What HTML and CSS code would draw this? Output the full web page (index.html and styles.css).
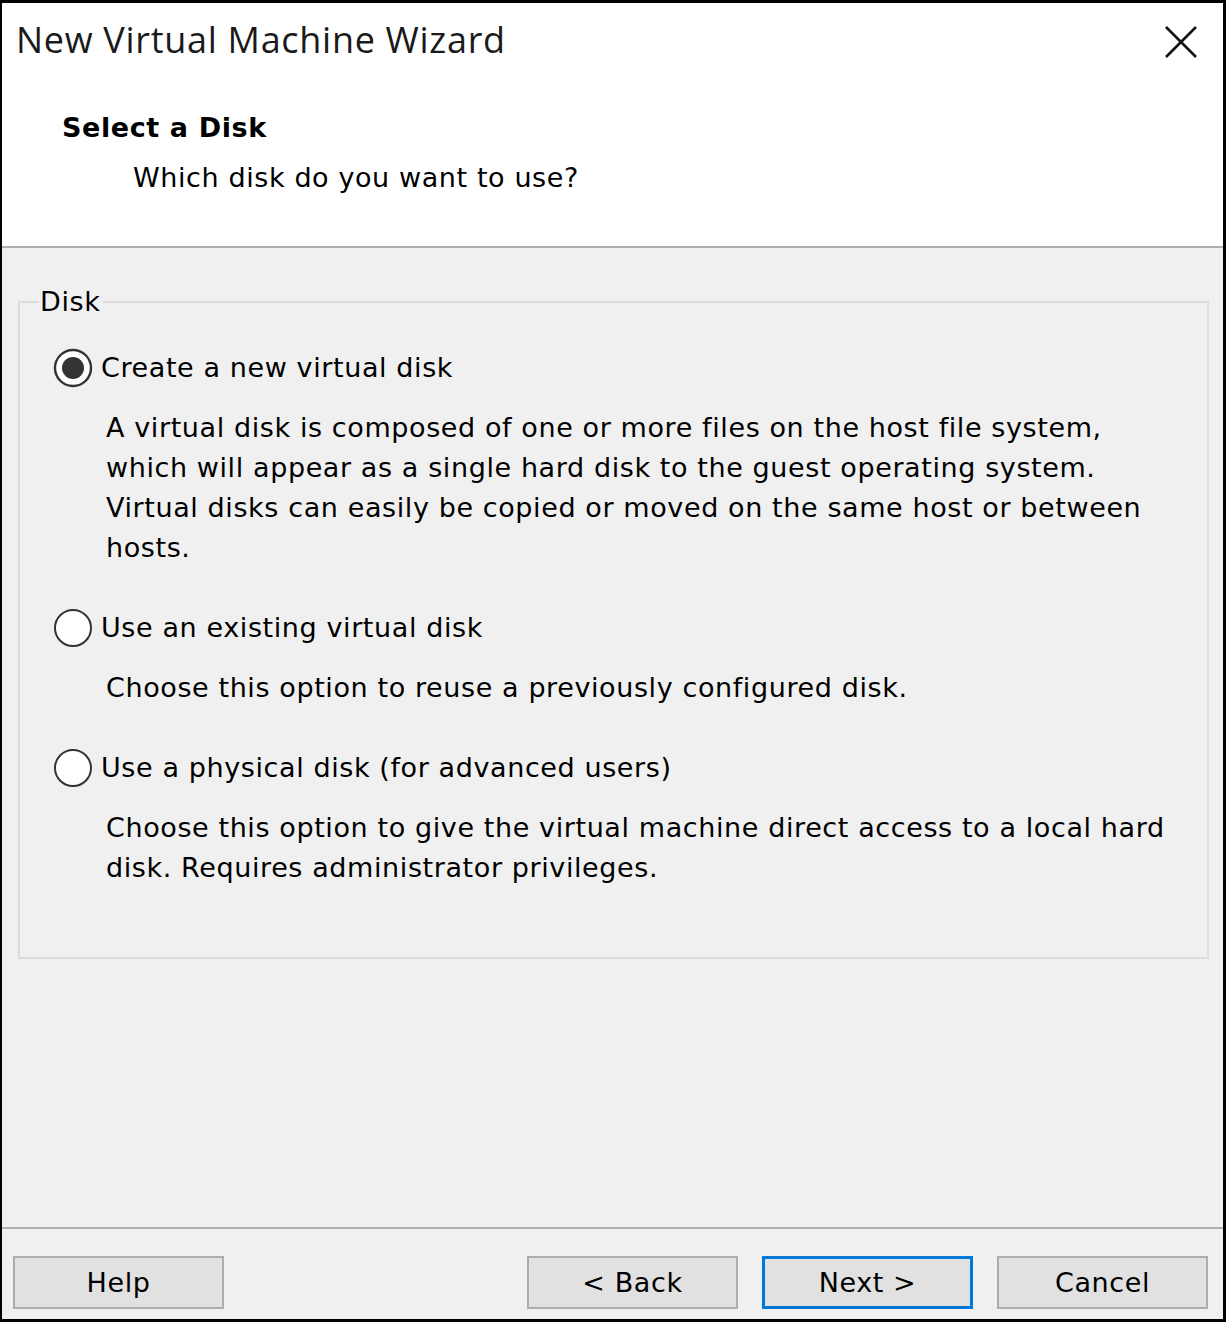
FILE: index.html
```html
<!DOCTYPE html>
<html>
<head>
<meta charset="utf-8">
<link rel="stylesheet" href="styles.css">
</head>
<body>
<div class="dialog">
  <div class="header">
    <div class="title-row">
      <div class="title">New Virtual Machine Wizard</div>
      <svg class="close" width="34" height="34" viewBox="0 0 34 34"><path d="M2 2 L32 32 M32 2 L2 32" stroke="#111" stroke-width="2.6" fill="none"/></svg>
    </div>
    <div class="page-title">Select a Disk</div>
    <div class="page-sub">Which disk do you want to use?</div>
  </div>
  <div class="content">
    <fieldset class="group">
      <legend class="group-label">Disk</legend>
      <div class="option first">
        <svg class="radio" width="40" height="40" viewBox="0 0 40 40"><circle cx="20" cy="20" r="18" fill="#fff" stroke="#333" stroke-width="2.4"/><circle cx="20" cy="20" r="11" fill="#333"/></svg>
        <span class="opt-label">Create a new virtual disk</span>
      </div>
      <p class="desc">A virtual disk is composed of one or more files on the host file system,<br>which will appear as a single hard disk to the guest operating system.<br>Virtual disks can easily be copied or moved on the same host or between<br>hosts.</p>
      <div class="option">
        <svg class="radio" width="40" height="40" viewBox="0 0 40 40"><circle cx="20" cy="20" r="18" fill="#fff" stroke="#333" stroke-width="2"/></svg>
        <span class="opt-label">Use an existing virtual disk</span>
      </div>
      <p class="desc">Choose this option to reuse a previously configured disk.</p>
      <div class="option">
        <svg class="radio" width="40" height="40" viewBox="0 0 40 40"><circle cx="20" cy="20" r="18" fill="#fff" stroke="#333" stroke-width="2"/></svg>
        <span class="opt-label">Use a physical disk (for advanced users)</span>
      </div>
      <p class="desc">Choose this option to give the virtual machine direct access to a local hard<br>disk. Requires administrator privileges.</p>
    </fieldset>
  </div>
  <div class="footer">
    <button class="btn">Help</button>
    <div class="spacer"></div>
    <button class="btn">&lt; Back</button>
    <button class="btn default">Next &gt;</button>
    <button class="btn">Cancel</button>
  </div>
</div>
</body>
</html>
```

FILE: styles.css
```css
html, body {
  margin: 0;
  padding: 0;
  background: #ffffff;
}
.dialog {
  box-sizing: border-box;
  width: 1226px;
  height: 1322px;
  border-style: solid;
  border-color: #000;
  border-width: 3px 3px 3px 2px;
  background: #f0f0f0;
  display: flex;
  flex-direction: column;
  font-family: "DejaVu Sans", sans-serif;
  font-size: 27px;
  letter-spacing: 0.6px;
  color: #000;
}
.header {
  box-sizing: border-box;
  height: 245px;
  background: #fff;
  border-bottom: 2px solid #b0b0b0;
  padding-top: 15px;
}
.title-row {
  display: flex;
  justify-content: space-between;
  align-items: center;
  padding-left: 14px;
  padding-right: 25px;
  height: 44px;
}
.title {
  font-family: "Open Sans", "Noto Sans", sans-serif;
  font-size: 36px;
  letter-spacing: 0.7px;
  line-height: 44px;
  color: #1a1a1a;
}
.close {
  display: block;
  margin-top: 3px;
}
.page-title {
  font-weight: bold;
  margin-left: 60px;
  margin-top: 46px;
  line-height: 40px;
  font-size: 27px;
}
.page-sub {
  margin-left: 131px;
  margin-top: 10px;
  line-height: 40px;
}
.content {
  flex: 1;
  padding: 0 14px 0 16px;
}
.group {
  margin: 34px 0 0 0;
  padding: 0 0 0 33px;
  height: 677px;
  box-sizing: border-box;
  border: 2px solid #dcdcdc;
  min-width: 0;
}
.group-label {
  margin-left: -14px;
  padding: 0 3px 0 1px;
  line-height: 40px;
}
.option {
  display: flex;
  align-items: center;
  gap: 8px;
  height: 40px;
  margin-top: 40px;
}
.option.first {
  margin-top: 26px;
}
.radio {
  display: block;
}
.opt-label {
  line-height: 40px;
}
.desc {
  margin: 20px 0 0 53px;
  line-height: 40px;
  white-space: nowrap;
}
.footer {
  box-sizing: border-box;
  height: 92px;
  border-top: 2px solid #b0b0b0;
  padding: 27px 15px 10px 11px;
  display: flex;
  gap: 24px;
}
.spacer {
  flex: 1;
}
.btn {
  box-sizing: border-box;
  width: 211px;
  height: 53px;
  background: #e1e1e1;
  border: 2px solid #adadad;
  font-family: "DejaVu Sans", sans-serif;
  font-size: 27px;
  letter-spacing: 0.6px;
  color: #000;
  padding: 0;
  margin: 0;
}
.btn.default {
  border: 3px solid #0078d7;
}
```
